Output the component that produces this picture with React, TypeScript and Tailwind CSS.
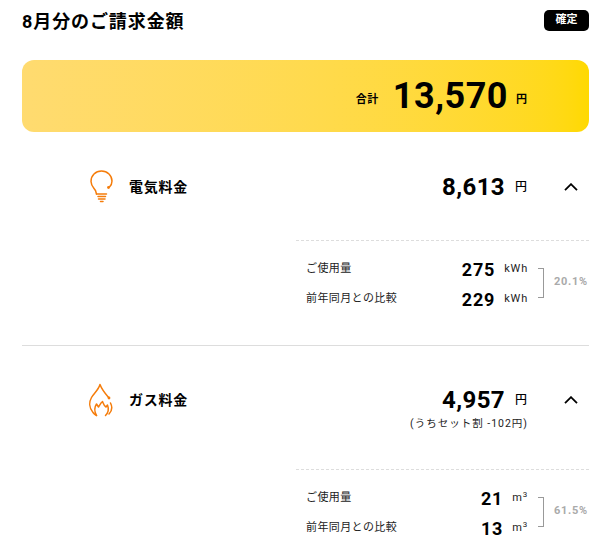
import React from 'react';

const font = { fontFamily: 'Roboto, "Noto Sans CJK JP", sans-serif' };

const BulbIcon = () => (
  <svg width="24" height="34" viewBox="0 0 24 34" fill="none" stroke="#f57c0a" strokeWidth="1.5" strokeLinecap="round">
    <path d="M6.5 24 L5.500 20.500 C3.500 17.500 1 15.500 1 11.500 C1 5.500 5.500 1 11.500 1 C17.500 1 22 5.500 22 11 C22 13.500 21 15.500 19.500 17" />
    <circle cx="18.500" cy="17.500" r="1.400" fill="#f57c0a" stroke="none" />
    <path d="M6.500 24 H16.500 M8 26.500 H15.500 M8.500 29 H15 M10.500 31.500 H13" />
  </svg>
);

const FlameIcon = () => (
  <svg width="26" height="34" viewBox="0 0 26 34" fill="none" stroke="#f57c0a" strokeWidth="1.5" strokeLinecap="round" strokeLinejoin="round">
    <path d="M21 15 C18 11.500 14 7 12 1.500 C10.500 7 6 10 3.500 14.500 C1 19 1 25 5 29.500 C6 31 7.500 32 8.500 32.500" />
    <path d="M8.500 32.500 C6 28 6.500 24 8.500 21 L10.500 24 C12 21.500 13 19.500 14.500 18.500 C15.500 21 16 23 18 24 L19.500 22 C21 26 20 30 17.500 32.500" />
    <path d="M22.500 20 C24.500 24 24 28 21 31" />
    <circle cx="21" cy="15" r="1.400" fill="#f57c0a" stroke="none" />
  </svg>
);

const Chevron = () => (
  <svg width="14" height="8" viewBox="0 0 14 8" fill="none" stroke="#000" strokeWidth="1.800">
    <path d="M1 7.200 L7 1.200 L13 7.200" />
  </svg>
);

type RowProps = { label: string; value: string; unit: React.ReactNode };

const UsageRow = ({ label, value, unit }: RowProps) => (
  <div className="flex h-[24px] items-center text-[#222222]">
    <span className="flex-1 text-[11px] tracking-[0.4px]">{label}</span>
    <span className="text-[18px] font-bold tracking-[0.8px] text-black">{value}</span>
    <span className="ml-[9px] text-[11px] tracking-[0.8px]">{unit}</span>
  </div>
);

type UsageProps = { current: string; previous: string; unit: React.ReactNode; percent: string };

const Usage = ({ current, previous, unit, percent }: UsageProps) => (
  <div className="ml-[274px] w-[293px] border-t border-dashed border-[#dddddd] pt-[16px]">
    <div className="flex items-center">
      <div className="flex w-[242px] flex-col gap-[6px] pl-[10px] pr-[10px]">
        <UsageRow label="ご使用量" value={current} unit={unit} />
        <UsageRow label="前年同月との比較" value={previous} unit={unit} />
      </div>
      <div className="mb-[2px] h-[30px] w-[6px] border border-l-0 border-[#999999]" />
      <span className="mb-[4px] ml-[10px] text-[11px] font-bold tracking-[0.7px] text-[#aaaaaa]">{percent}</span>
    </div>
  </div>
);

export default function App() {
  return (
    <div className="h-[560px] w-[614px] overflow-hidden bg-white pl-[22px] pr-[25px] text-black" style={font}>
      <header className="flex h-[60px] items-start justify-between">
        <h1 className="mt-[7px] text-[18px] font-bold leading-[30px] tracking-[0.9px]">8月分のご請求金額</h1>
        <span className="mt-[10px] flex h-[21px] w-[45px] items-center justify-center rounded-[5px] bg-black text-[11px] font-bold text-white">
          確定
        </span>
      </header>

      <div className="flex h-[72px] items-center justify-end rounded-[12px] bg-gradient-to-r from-[#ffdb70] to-[#ffd900] pr-[62px]">
        <span className="mt-[9px] text-[11px] font-bold tracking-[0.5px]">合計</span>
        <span className="ml-[14px] text-[36px] font-bold leading-none tracking-[0.5px]">13,570</span>
        <span className="ml-[8px] mt-[9px] text-[11px] font-bold">円</span>
      </div>

      <section className="h-[214px] border-b border-[#dddddd]">
        <div className="flex h-[108px] items-center pt-[2px]">
          <div className="ml-[68px] flex w-[39px] items-center">
            <BulbIcon />
          </div>
          <span className="text-[14px] font-bold tracking-[0.75px]">電気料金</span>
          <div className="ml-auto flex items-center pr-[11px]">
            <span className="text-[24px] font-bold tracking-[0.4px]">8,613</span>
            <span className="ml-[10px] w-[13px] text-[12px] font-medium">円</span>
            <span className="ml-[36px]"><Chevron /></span>
          </div>
        </div>
        <Usage current="275" previous="229" unit="kWh" percent="20.1%" />
      </section>

      <section>
        <div className="flex h-[123px] items-start pt-[39px]">
          <div className="ml-[66px] flex h-[30px] w-[41px] items-center">
            <FlameIcon />
          </div>
          <span className="flex h-[30px] items-center text-[14px] font-bold tracking-[0.75px]">ガス料金</span>
          <div className="ml-auto pr-[11px]">
            <div className="flex h-[30px] items-center justify-end">
              <span className="text-[24px] font-bold tracking-[0.4px]">4,957</span>
              <span className="ml-[10px] w-[13px] text-[12px] font-medium">円</span>
              <span className="ml-[36px]"><Chevron /></span>
            </div>
            <p className="mr-[50px] mt-[1px] text-right text-[10.5px] leading-[16px] tracking-[1px] text-[#222222]">(うちセット割 -102円)</p>
          </div>
        </div>
        <Usage
          current="21"
          previous="13"
          unit={<>m<sup className="text-[8px]">3</sup></>}
          percent="61.5%"
        />
      </section>
    </div>
  );
}
